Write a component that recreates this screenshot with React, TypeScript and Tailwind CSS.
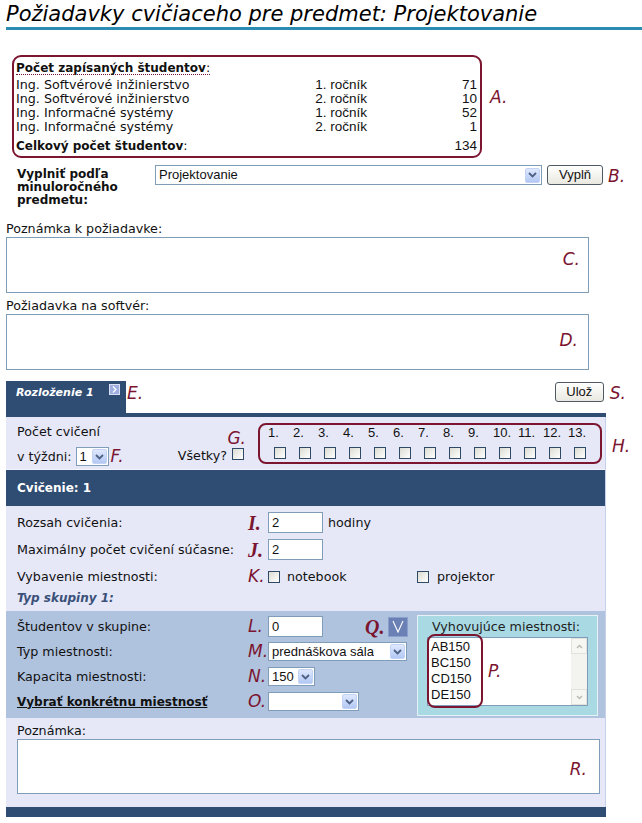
import React from 'react';

// Annotation letters (A., B., ...) drawn over the form
function Mark({ children, className = '' }: { children: React.ReactNode; className?: string }) {
  return (
    <span
      className={`font-['DejaVu_Sans',sans-serif] text-[17px] italic leading-none text-[#7b1530] ${className}`}
    >
      {children}
    </span>
  );
}

function SerifMark({ children, className = '' }: { children: React.ReactNode; className?: string }) {
  return (
    <span
      className={`font-['Liberation_Serif',serif] text-[20px] font-bold italic leading-none text-[#7b1530] ${className}`}
    >
      {children}
    </span>
  );
}

function Arrow() {
  return (
    <span className="mr-[1px] ml-auto flex h-[15px] w-[15px] shrink-0 items-center justify-center rounded-[2px] border border-[#c3d3f5] bg-linear-to-b from-[#dfe8fd] to-[#b3c8f4]">
      <svg width="9" height="6" viewBox="0 0 9 6">
        <path d="M1 1 L4.5 4.5 L8 1" stroke="#4d6185" strokeWidth="1.8" fill="none" />
      </svg>
    </span>
  );
}

function Select({ value, className = '' }: { value: string; className?: string }) {
  return (
    <div
      className={`flex h-[19px] items-center border border-[#7f9db9] bg-white pl-[3px] font-['Liberation_Sans',sans-serif] text-[13px] ${className}`}
    >
      <span className="truncate">{value}</span>
      <Arrow />
    </div>
  );
}

function Checkbox() {
  return (
    <span className="inline-block h-[12px] w-[12px] shrink-0 border border-[#2f4a66] bg-linear-to-br from-[#dcdcd4] to-white" />
  );
}

function Button({ children, className = '' }: { children: React.ReactNode; className?: string }) {
  return (
    <div
      className={`flex h-[20px] items-center justify-center rounded-[3px] border border-[#505a64] bg-linear-to-b from-white to-[#e9e8e0] font-['Liberation_Sans',sans-serif] text-[13px] ${className}`}
    >
      {children}
    </div>
  );
}

function Input({ value, className = '' }: { value: string; className?: string }) {
  return (
    <div
      className={`flex h-[21px] items-center border border-[#7f9db9] bg-white pl-[3px] font-['Liberation_Sans',sans-serif] text-[13px] ${className}`}
    >
      {value}
    </div>
  );
}

const students = [
  ['Ing. Softvérové inžinierstvo', '1. ročník', '71'],
  ['Ing. Softvérové inžinierstvo', '2. ročník', '10'],
  ['Ing. Informačné systémy', '1. ročník', '52'],
  ['Ing. Informačné systémy', '2. ročník', '1'],
];

const weeks = ['1.', '2.', '3.', '4.', '5.', '6.', '7.', '8.', '9.', '10.', '11.', '12.', '13.'];

export default function App() {
  return (
    <div className="min-h-[823px] w-[642px] bg-white font-['DejaVu_Sans',sans-serif] text-[12.7px] leading-[14px] text-[#111]">
      <h1 className="ml-[6px] border-b-[3px] border-[#2b8cb3] pt-[3px] pb-[1px] text-[21px] font-normal italic leading-[23px] text-black">
        Požiadavky cvičiaceho pre predmet: Projektovanie
      </h1>

      {/* ─── A: enrolled students ─────────────────────────────── */}
      <div className="mt-[25px] ml-[12px] flex items-start">
        <div className="h-[103px] w-[470px] rounded-[9px] border-2 border-[#7b1530] pt-[4px] pr-[3px] pl-[2px]">
          <div className="inline-block border-b border-dotted border-[#7b1530] leading-[12px]">
            <span className="text-[12px] font-bold">Počet zapísaných študentov</span>:
          </div>
          <div className="mt-[3px]">
            {students.map(([name, year, count], i) => (
              <div key={i} className="flex leading-[14px]">
                <span className="flex-1">{name}</span>
                <span className="w-[60px] text-right font-['Liberation_Sans',sans-serif] text-[13.5px]">{year}</span>
                <span className="w-[110px] text-right font-['Liberation_Sans',sans-serif] text-[13.5px]">{count}</span>
              </div>
            ))}
          </div>
          <div className="mt-[5px] flex leading-[14px]">
            <span className="flex-1">
              <span className="text-[12px] font-bold">Celkový počet študentov</span>:
            </span>
            <span className="font-['Liberation_Sans',sans-serif] text-[13.5px]">134</span>
          </div>
        </div>
        <Mark className="mt-[34px] ml-[8px]">A.</Mark>
      </div>

      {/* ─── B: fill from last year ───────────────────────────── */}
      <div className="mt-[7px] flex items-start">
        <div className="ml-[17px] w-[138px] pt-[3px] text-[12px] leading-[13px] font-bold">
          Vyplniť podľa
          <br />
          minuloročného
          <br />
          predmetu:
        </div>
        <Select value="Projektovanie" className="h-[20px] w-[387px]" />
        <Button className="ml-[5px] w-[56px]">Vyplň</Button>
        <Mark className="mt-[3px] ml-[5px]">B.</Mark>
      </div>

      {/* ─── C / D: notes ─────────────────────────────────────── */}
      <div className="mt-[15px] ml-[6px] leading-[14px]">Poznámka k požiadavke:</div>
      <div className="relative mt-[1px] ml-[6px] h-[56px] w-[583px] border border-[#7f9db9] bg-white">
        <Mark className="absolute top-[13px] right-[8px]">C.</Mark>
      </div>
      <div className="mt-[6px] ml-[6px] leading-[14px]">Požiadavka na softvér:</div>
      <div className="relative mt-[1px] ml-[6px] h-[56px] w-[583px] border border-[#7f9db9] bg-white">
        <Mark className="absolute top-[17px] right-[10px]">D.</Mark>
      </div>

      {/* ─── Tab header ───────────────────────────────────────── */}
      <div className="mt-[11px] ml-[6px] flex h-[32px] w-[636px] items-start">
        <div className="flex h-[32px] w-[120px] items-start bg-[#2f4c73] pt-[5px] pl-[10px]">
          <span className="text-[11px] font-bold italic leading-[14px] text-white">Rozloženie 1</span>
          <span className="mt-[-2px] ml-[15px] flex h-[11px] w-[11px] items-center justify-center border border-[#d9e0f5] bg-[#9fb0e0]">
            <svg width="5" height="7" viewBox="0 0 5 7">
              <path d="M1 0.5 L4 3.5 L1 6.5" stroke="white" strokeWidth="1.2" fill="none" />
            </svg>
          </span>
        </div>
        <Mark className="mt-[4px] ml-[1px]">E.</Mark>
        <Button className="mt-[1px] ml-auto w-[49px]">Ulož</Button>
        <Mark className="mt-[4px] ml-[6px] mr-[16px]">S.</Mark>
      </div>
      <div className="ml-[6px] h-[4px] w-[600px] bg-[#2f4c73]" />

      {/* ─── Panel ────────────────────────────────────────────── */}
      <div className="relative ml-[6px] w-[600px] border-r border-[#c6d0ec] bg-[#e6e8f8]">
        {/* weeks row */}
        <div className="flex h-[53px] items-start border-b border-[#f4f5fc]">
          <div className="w-[158px] pt-[7px] pl-[11px]">
            <div className="leading-[16px]">Počet cvičení</div>
            <div className="mt-[7px] flex h-[19px] items-center">
              <span>v týždni:</span>
              <Select value="1" className="ml-[4px] h-[18px] w-[33px]" />
              <Mark className="ml-[2px]">F.</Mark>
            </div>
          </div>
          <div className="flex w-[80px] flex-col items-end pt-[13px]">
            <Mark className="mr-[-2px]">G.</Mark>
            <div className="mt-[1px] flex items-center">
              <span>Všetky?</span>
              <span className="ml-[5px]">
                <Checkbox />
              </span>
            </div>
          </div>
          <div className="mt-[6px] ml-[14px] flex h-[41px] w-[344px] rounded-[8px] border-2 border-[#7b1530] pl-[6px]">
            {weeks.map((w) => (
              <div key={w} className="flex w-[25px] flex-col">
                <span className="pt-[1px] pl-[2px] font-['Liberation_Sans',sans-serif] text-[13px] leading-[14px]">{w}</span>
                <span className="mt-[7px] ml-[8px]">
                  <Checkbox />
                </span>
              </div>
            ))}
          </div>
          <Mark className="absolute top-[21px] left-[606px]">H.</Mark>
        </div>

        {/* Cvičenie header */}
        <div className="flex h-[36px] items-center bg-[#2f4c73] pl-[11px] text-[12px] font-bold text-white">Cvičenie: 1</div>

        {/* exercise rows */}
        <div className="pt-[3px] pl-[11px]">
          <div className="flex h-[27px] items-center">
            <span className="w-[231px]">Rozsah cvičenia:</span>
            <SerifMark className="w-[20px]">I.</SerifMark>
            <Input value="2" className="w-[55px]" />
            <span className="ml-[5px]">hodiny</span>
          </div>
          <div className="flex h-[27px] items-center">
            <span className="w-[231px]">Maximálny počet cvičení súčasne:</span>
            <SerifMark className="w-[20px]">J.</SerifMark>
            <Input value="2" className="w-[55px]" />
          </div>
          <div className="flex h-[27px] items-center">
            <span className="w-[231px]">Vybavenie miestnosti:</span>
            <Mark className="w-[20px]">K.</Mark>
            <div className="flex w-[149px] items-center">
              <Checkbox />
              <span className="ml-[7px]">notebook</span>
            </div>
            <Checkbox />
            <span className="ml-[8px]">projektor</span>
          </div>
          <div className="h-[21px] pt-[1px] text-[12px] font-bold italic text-[#3b5179]">Typ skupiny 1:</div>
        </div>

        {/* group */}
        <div className="flex bg-[#b0c3de]">
          <div className="w-[411px] pt-[3px] pb-[4px] pl-[11px]">
            <div className="flex h-[25px] items-center">
              <span className="w-[231px]">Študentov v skupine:</span>
              <Mark className="w-[20px]">L.</Mark>
              <Input value="0" className="w-[55px]" />
              <SerifMark className="ml-[42px]">Q.</SerifMark>
              <span className="ml-[4px] flex h-[20px] w-[20px] items-center justify-center border border-[#8b9fcc] bg-[#6b80b4]">
                <svg width="12" height="13" viewBox="0 0 12 13">
                  <path d="M1 1 L6 12 L11 1" stroke="white" strokeWidth="1.1" fill="none" />
                </svg>
              </span>
            </div>
            <div className="flex h-[25px] items-center">
              <span className="w-[231px]">Typ miestnosti:</span>
              <Mark className="w-[20px]">M.</Mark>
              <Select value="prednáškova sála" className="w-[139px]" />
            </div>
            <div className="flex h-[25px] items-center">
              <span className="w-[231px]">Kapacita miestnosti:</span>
              <Mark className="w-[20px]">N.</Mark>
              <Select value="150" className="w-[47px]" />
            </div>
            <div className="flex h-[25px] items-center">
              <span className="w-[231px] text-[12px] font-bold underline">Vybrať konkrétnu miestnosť</span>
              <Mark className="w-[20px]">O.</Mark>
              <Select value="" className="w-[91px]" />
            </div>
          </div>
          <div className="mt-[4px] h-[101px] w-[181px] border border-[#e4f2f6] bg-[#a9dae4] px-[9px] pt-[4px]">
            <div className="pl-[5px] leading-[14px] text-[#222]">Vyhovujúce miestnosti:</div>
            <div className="relative mt-[3px] flex h-[69px] border border-[#7f9db9] bg-white">
              <div className="flex-1 pt-[1px] pl-[3px] font-['Liberation_Sans',sans-serif] text-[13px] leading-[16px]">
                <div>AB150</div>
                <div>BC150</div>
                <div>CD150</div>
                <div>DE150</div>
              </div>
              <div className="flex w-[16px] flex-col justify-between bg-[#f3f3ef]">
                <span className="flex h-[16px] items-center justify-center border border-[#e2e2dc] bg-[#f6f6f2]">
                  <svg width="7" height="5" viewBox="0 0 7 5">
                    <path d="M1 4 L3.5 1.5 L6 4" stroke="#b9b9b0" strokeWidth="1.3" fill="none" />
                  </svg>
                </span>
                <span className="flex h-[16px] items-center justify-center border border-[#e2e2dc] bg-[#f6f6f2]">
                  <svg width="7" height="5" viewBox="0 0 7 5">
                    <path d="M1 1 L3.5 3.5 L6 1" stroke="#b9b9b0" strokeWidth="1.3" fill="none" />
                  </svg>
                </span>
              </div>
              <div className="absolute top-[-4px] left-[-1px] h-[74px] w-[56px] rounded-[8px] border-2 border-[#7b1530]" />
              <Mark className="absolute top-[25px] left-[60px]">P.</Mark>
            </div>
          </div>
        </div>

        {/* note */}
        <div className="pt-[6px] pb-[13px] pl-[11px]">
          <div className="leading-[14px]">Poznámka:</div>
          <div className="relative mt-[1px] h-[55px] w-[583px] border border-[#7f9db9] bg-white">
            <Mark className="absolute top-[21px] right-[12px]">R.</Mark>
          </div>
        </div>
      </div>
      <div className="ml-[6px] h-[10px] w-[600px] bg-[#2f4c73]" />
    </div>
  );
}
